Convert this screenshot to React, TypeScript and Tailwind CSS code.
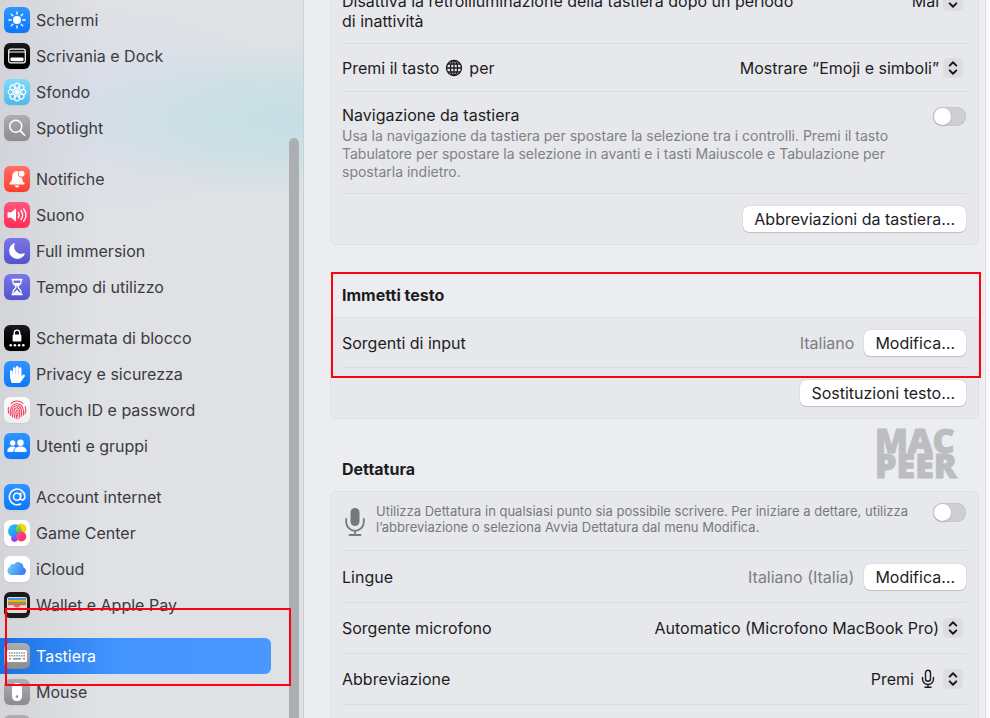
import type { ReactNode } from 'react'
import { IoMoon } from 'react-icons/io5'
import { FaHandPaper } from 'react-icons/fa'

type NavItem = {
  label: string
  tile: string
  icon: ReactNode
  selected?: boolean
}

const blue = 'bg-linear-to-b from-[#2e95ff] to-[#0a78fb]'
const black = 'bg-linear-to-b from-[#1c1c1e] to-[#000000]'
const indigo = 'bg-linear-to-b from-[#7a78e6] to-[#5452cf]'
const gray = 'bg-linear-to-b from-[#aeaeb2] to-[#8b8b90]'

function Glyph({ children }: { children: ReactNode }) {
  return (
    <svg viewBox="0 0 26 26" className="size-full" fill="none" stroke="none" aria-hidden="true">
      {children}
    </svg>
  )
}

const sunRays = [0, 45, 90, 135, 180, 225, 270, 315]

const groups: NavItem[][] = [
  [
    {
      label: 'Schermi',
      tile: blue,
      icon: (
        <Glyph>
          <circle cx="13" cy="13" r="4" fill="#fff" />
          {sunRays.map((a) => (
            <path key={a} d="M13 7.2V4.9" stroke="#fff" strokeWidth="1.3" strokeLinecap="round" transform={`rotate(${a} 13 13)`} />
          ))}
        </Glyph>
      ),
    },
    {
      label: 'Scrivania e Dock',
      tile: black,
      icon: (
        <Glyph>
          <rect x="4.7" y="6.2" width="16.6" height="13.6" rx="2" stroke="#fff" strokeWidth="1.2" />
          <path d="M5 9h16" stroke="#fff" strokeWidth="1" />
          <rect x="6.5" y="14.6" width="13" height="3.6" rx="0.8" fill="#fff" />
        </Glyph>
      ),
    },
    {
      label: 'Sfondo',
      tile: 'bg-linear-to-b from-[#7fdcf8] to-[#4fb8ee]',
      icon: (
        <Glyph>
          {sunRays.map((a) => (
            <circle key={a} cx="13" cy="6.7" r="2.5" stroke="#fff" strokeWidth="1.2" transform={`rotate(${a} 13 13)`} />
          ))}
          {sunRays.map((a) => (
            <path key={a} d="M13 13V9.4" stroke="#fff" strokeWidth="1" transform={`rotate(${a} 13 13)`} />
          ))}
          <circle cx="13" cy="13" r="2" stroke="#fff" strokeWidth="0.9" />
        </Glyph>
      ),
    },
    {
      label: 'Spotlight',
      tile: gray,
      icon: (
        <Glyph>
          <circle cx="11.8" cy="11.2" r="6" stroke="#fff" strokeWidth="1.5" />
          <path d="m16.2 15.6 4.2 4.4" stroke="#fff" strokeWidth="1.8" strokeLinecap="round" />
        </Glyph>
      ),
    },
  ],
  [
    {
      label: 'Notifiche',
      tile: 'bg-linear-to-b from-[#ff6f63] to-[#ff3b30]',
      icon: (
        <Glyph>
          <path
            d="M13 5c-3.2.3-4.8 2.7-4.8 5.7 0 3.3-.8 4.9-2.3 6.1-.9.8-.5 1.8.6 1.8h13c1.1 0 1.5-1 .6-1.8-1.3-1.1-2-2.5-2.2-5.2a3.8 3.8 0 0 1-3.4-5.900A5.300 5.300 0 0 0 13 5Z"
            fill="#fff"
          />
          <path d="M10.600 19.600h4.800c-.3 1.300-1.200 2-2.400 2s-2.100-.7-2.400-2Z" fill="#fff" />
          <circle cx="17.600" cy="7.700" r="2.900" fill="#fff" />
        </Glyph>
      ),
    },
    {
      label: 'Suono',
      tile: 'bg-linear-to-b from-[#ff5480] to-[#ff2d55]',
      icon: (
        <Glyph>
          <path d="M3.500 11.200c0-.6.400-1 1-1h2.800l3.700-3.300c.5-.4 1-.2 1 .4v11.400c0 .6-.5.800-1 .4l-3.700-3.300H4.500c-.6 0-1-.4-1-1Z" fill="#fff" />
          <path
            d="M14.200 10.300c1.100 1.600 1.100 3.800 0 5.400M17 8.500c2 2.700 2 6.300 0 9M19.700 6.800c2.800 3.800 2.800 8.600 0 12.400"
            stroke="#fff"
            strokeWidth="1.300"
            strokeLinecap="round"
          />
        </Glyph>
      ),
    },
    { label: 'Full immersion', tile: indigo, icon: <IoMoon className="size-[18px] text-white" /> },
    {
      label: 'Tempo di utilizzo',
      tile: indigo,
      icon: (
        <Glyph>
          <path d="M8.300 5.600h9.400M8.300 20.400h9.400" stroke="#fff" strokeWidth="1.800" strokeLinecap="round" />
          <path d="M9 6v2.500c0 2 3 3 3 4.500s-3 2.500-3 4.500V20M17 6v2.500c0 2-3 3-3 4.500s3 2.500 3 4.500V20" stroke="#fff" strokeWidth="1.300" />
          <path d="M9.600 9h6.800L13 12.500ZM9.800 19.800c0-1.800 2.200-2.500 3.200-4.300 1 1.800 3.200 2.500 3.200 4.300Z" fill="#fff" />
        </Glyph>
      ),
    },
  ],
  [
    {
      label: 'Schermata di blocco',
      tile: black,
      icon: (
        <Glyph>
          <path d="M10.300 10V7.800a2.700 2.700 0 0 1 5.400 0V10" stroke="#fff" strokeWidth="1.400" />
          <rect x="8.600" y="9.600" width="8.800" height="6.800" rx="1.200" fill="#fff" />
          <circle cx="6.700" cy="20.300" r="1.300" fill="#fff" />
          <circle cx="10.900" cy="20.300" r="1.300" fill="#fff" />
          <circle cx="15.100" cy="20.300" r="1.300" fill="#fff" />
          <circle cx="19.300" cy="20.300" r="1.300" fill="#fff" />
        </Glyph>
      ),
    },
    { label: 'Privacy e sicurezza', tile: blue, icon: <FaHandPaper className="size-[17px] -scale-x-100 text-white" /> },
    {
      label: 'Touch ID e password',
      tile: 'bg-linear-to-b from-[#fdfdfd] to-[#efefef]',
      icon: (
        <Glyph>
          <g stroke="#f2415f" strokeWidth="1.100" strokeLinecap="round">
            <path d="M7 6.300a9 9 0 0 1 12 0M4.500 10.500a9 9 0 0 0 .3 5.800M21.200 9.500a9 9 0 0 1-.2 7.300" />
            <path d="M6.600 18.300c-1.400-6 1.200-11.500 6.400-11.500 4.800 0 7.400 4.500 6.300 11.300" />
            <path d="M8.700 20c-1.600-5.600-.6-11.200 4.300-11.200 4 0 5.500 4.700 4.200 10.700" />
            <path d="M10.900 21.100c-1.700-5.300-1.400-10.300 2.100-10.300 3 0 3.600 4.900 2 10.300" />
            <path d="M13 21.600c-1.300-4-1.500-8.600 0-8.600s1.300 4 .3 6" />
          </g>
        </Glyph>
      ),
    },
    {
      label: 'Utenti e gruppi',
      tile: blue,
      icon: (
        <Glyph>
          <circle cx="8.700" cy="10" r="2.700" fill="#fff" />
          <path d="M3.300 18.300c0-2.800 2.300-4.700 5.400-4.700 1.100 0 2.100.2 2.900.7-1.400 1.100-2.200 2.600-2.300 4.700H4c-.5 0-.7-.3-.7-.7Z" fill="#fff" />
          <circle cx="16.500" cy="9.700" r="3.200" fill="#fff" />
          <path d="M10.300 18.200c0-2.900 2.600-4.700 6.200-4.700s6.200 1.800 6.200 4.700c0 .5-.3.800-.8.800H11.100c-.5 0-.8-.3-.8-.8Z" fill="#fff" />
        </Glyph>
      ),
    },
  ],
  [
    {
      label: 'Account internet',
      tile: blue,
      icon: (
        <Glyph>
          <circle cx="13" cy="12.800" r="3.500" stroke="#fff" strokeWidth="1.500" />
          <path d="M16.900 9.300l-.5 5c-.2 2.400 4.600 2.600 4.600-2.100A7.900 7.900 0 1 0 16.600 20" stroke="#fff" strokeWidth="1.500" strokeLinecap="round" />
        </Glyph>
      ),
    },
    {
      label: 'Game Center',
      tile: 'bg-white',
      icon: (
        <Glyph>
          <defs>
            <linearGradient id="gc-blue" x1="0" y1="0" x2="1" y2="1">
              <stop stopColor="#23d0f5" />
              <stop offset="1" stopColor="#3d6cf5" />
            </linearGradient>
            <linearGradient id="gc-green" x1="0" y1="0" x2="0" y2="1">
              <stop stopColor="#b5dc1e" />
              <stop offset="1" stopColor="#2fb567" />
            </linearGradient>
            <linearGradient id="gc-pink" x1="0" y1="0" x2="1" y2="1">
              <stop stopColor="#ff4fa0" />
              <stop offset="1" stopColor="#fb2b52" />
            </linearGradient>
          </defs>
          <circle cx="10.500" cy="18.600" r="3.300" fill="#a63af0" />
          <circle cx="17" cy="9" r="5.400" fill="#f8d60c" />
          <circle cx="10.800" cy="11" r="6.800" fill="url(#gc-blue)" />
          <path d="M14.300 4.900a6.800 6.800 0 0 1 3.200 7.500l-.4 2c-5.200-.4-7.800-5.800-2.800-9.500Z" fill="url(#gc-green)" />
          <circle cx="17.300" cy="16.500" r="5" fill="url(#gc-pink)" />
        </Glyph>
      ),
    },
    {
      label: 'iCloud',
      tile: 'bg-white',
      icon: (
        <Glyph>
          <defs>
            <linearGradient id="cloud" x1="0" y1="0.300" x2="1" y2="0.700">
              <stop stopColor="#6fcbfb" />
              <stop offset="1" stopColor="#3478f6" />
            </linearGradient>
          </defs>
          <path
            d="M7.200 19A4.300 4.300 0 0 1 5.700 11a3.300 3.300 0 0 1 4.300-2.800 5.300 5.300 0 0 1 9.500 3.200 4 4 0 0 1-.7 7.600Z"
            fill="url(#cloud)"
          />
        </Glyph>
      ),
    },
    {
      label: 'Wallet e Apple Pay',
      tile: 'bg-[#1b1b1d]',
      icon: (
        <Glyph>
          <rect x="3" y="5" width="20" height="16" rx="2" fill="#dfddd6" />
          <path d="M4 6h18v2.500H4Z" fill="#3f9bd9" />
          <path d="M4 8h18v2.300H4Z" fill="#f3b32f" />
          <path d="M4 9.800h18v2H4Z" fill="#5bb24f" />
          <path d="M4 11.300h18v1.900h-5.200c-.9 0-1.400 2.300-3.800 2.300s-2.900-2.300-3.800-2.300H4Z" fill="#f0604f" />
        </Glyph>
      ),
    },
  ],
  [
    {
      label: 'Tastiera',
      tile: gray,
      selected: true,
      icon: (
        <Glyph>
          <rect x="3" y="7" width="20" height="12" rx="1.500" fill="#fff" />
          <path d="M5 10h16M5 12.700h16" stroke="#8e8e93" strokeWidth="1.500" strokeDasharray="1.500 0.900" />
          <path d="M5 15.700h2M9 15.700h8M19 15.700h2" stroke="#8e8e93" strokeWidth="1.500" />
        </Glyph>
      ),
    },
    {
      label: 'Mouse',
      tile: gray,
      icon: (
        <Glyph>
          <rect x="8" y="4" width="10" height="18" rx="4.500" fill="#fff" />
          <circle cx="13" cy="17.500" r="1.200" fill="#8e8e93" />
        </Glyph>
      ),
    },
    { label: 'Trackpad', tile: gray, icon: null },
  ],
]

function Sidebar() {
  return (
    <aside className="flex w-[304px] shrink-0 border-r border-[#cfd0d4] bg-[linear-gradient(90deg,rgba(200,201,206,0.500)_0,rgba(205,206,211,0.350)_50px,rgba(224,225,229,0)_100px),radial-gradient(ellipse_230px_80px_at_290px_120px,#c5dfe4_0%,rgba(200,224,228,0.750)_50%,rgba(224,225,229,0)_100%),radial-gradient(ellipse_190px_110px_at_110px_110px,#d8ddea_0%,rgba(224,225,229,0)_100%)] bg-[#e0e1e5]">
      <nav aria-label="Impostazioni" className="flex min-w-0 flex-1 flex-col gap-[15px] pt-0.5 pr-[18px]">
        {groups.map((items, i) => (
          <ul key={i}>
            {items.map((item) => (
              <li key={item.label} className="relative">
                <a
                  href="#"
                  aria-current={item.selected ? 'page' : undefined}
                  className={
                    item.selected
                      ? 'flex h-9 items-center gap-1.5 rounded-r-md bg-linear-to-r from-[#1473e6] via-[#4595ff] via-45% to-[#4a97ff] pl-1 text-base text-white'
                      : 'flex h-9 items-center gap-1.5 pl-1 text-base text-[#3a3b3f]'
                  }
                >
                  <span className={`flex size-[26px] shrink-0 items-center justify-center rounded-md shadow-xs ${item.tile}`}>
                    {item.icon}
                  </span>
                  {item.label}
                </a>
                {item.selected && (
                  <span className="pointer-events-none absolute -top-[30px] -right-5 left-[5px] z-10 h-[78px] border-2 border-[#ff0015]" />
                )}
              </li>
            ))}
          </ul>
        ))}
      </nav>
      <div className="mt-[138px] mr-1 w-2.5 rounded-t-full bg-[#adaeb2]" />
    </aside>
  )
}

function Chevrons() {
  return (
    <span className="pointer-events-none absolute top-0 right-[3px] flex size-5 items-center justify-center rounded-[5px] bg-[#dcdde1]">
      <svg viewBox="0 0 20 20" className="size-5" fill="none" stroke="#1d1d1f" strokeWidth="2" strokeLinecap="round" strokeLinejoin="round" aria-hidden="true">
        <path d="M6.700 7.600 10 4.200l3.300 3.400M6.700 12.400l3.300 3.400 3.300-3.400" />
      </svg>
    </span>
  )
}

function Picker({ label, value, icon }: { label: string; value: string; icon?: ReactNode }) {
  return (
    <span className="relative flex h-5 items-center">
      <select
        aria-label={label}
        className={`field-sizing-content h-5 appearance-none bg-transparent text-base leading-5 text-[#1d1d1f] ${icon ? 'pr-[52px]' : 'pr-[27px]'}`}
      >
        <option>{value}</option>
      </select>
      {icon && <span className="pointer-events-none absolute right-[31px]">{icon}</span>}
      <Chevrons />
    </span>
  )
}

function Toggle({ label }: { label: string }) {
  return (
    <input
      type="checkbox"
      role="switch"
      aria-label={label}
      className="h-[19px] w-[33px] shrink-0 appearance-none rounded-full bg-[#cecfd3] p-px shadow-[inset_0_0_1px_rgba(0,0,0,0.300)] before:block before:size-[17px] before:rounded-full before:bg-white before:shadow-sm checked:bg-[#0a78fb] checked:before:ml-3.5"
    />
  )
}

function PushButton({ children }: { children: ReactNode }) {
  return (
    <button
      type="button"
      className="h-[26px] shrink-0 rounded-md bg-white px-[11px] text-base leading-6 text-[#1d1d1f] shadow-[0_0_1px_rgba(0,0,0,0.300),0_1px_1px_rgba(0,0,0,0.150)]"
    >
      {children}
    </button>
  )
}

function Card({ children, className = '' }: { children: ReactNode; className?: string }) {
  return (
    <div className={`rounded-md border border-[#dedfe3] bg-[#e7e8ec] pr-3 pl-[11px] ${className}`}>
      <div className="divide-y divide-[#dadbdf]">{children}</div>
    </div>
  )
}

function Row({ children, className = 'h-[51px] items-center' }: { children: ReactNode; className?: string }) {
  return <div className={`flex justify-between gap-3 ${className}`}>{children}</div>
}

function SectionTitle({ children }: { children: ReactNode }) {
  return <h2 className="h-[72px] pt-10 pl-3 text-base leading-5 font-bold">{children}</h2>
}

function Watermark() {
  return (
    <svg viewBox="0 0 84 54" className="absolute top-2 right-5 h-[54px] w-[84px]" aria-hidden="true">
      <g fill="#bcbdc1" stroke="#bcbdc1" strokeWidth="1" fontFamily="'Open Sans', sans-serif" fontWeight="800" fontSize="34">
        <text x="0" y="26">MAC</text>
        <text x="0" y="51">PEER</text>
      </g>
    </svg>
  )
}

export default function App() {
  return (
    <div className="flex h-screen overflow-hidden bg-[#f8f8fa] pr-1 font-['Inter','Liberation_Sans',sans-serif] text-base text-[#1d1d1f]">
      <Sidebar />
      <main className="min-w-0 flex-1 border-r border-[#dfe0e4] bg-[#ecedf1] pr-1.5 pl-[26px]">
        <Card className="-mt-[22px]">
          <Row className="items-start py-3 leading-5">
            <p className="max-w-[464px]">Disattiva la retroilluminazione della tastiera dopo un periodo di inattività</p>
            <Picker label="Disattiva la retroilluminazione" value="Mai" />
          </Row>
          <Row className="h-12 items-center">
            <p className="flex items-center gap-1.5">
              Premi il tasto
              <svg viewBox="0 0 18 18" className="size-[18px]" fill="none" stroke="#1d1d1f" strokeWidth="1.300" aria-label="Globo">
                <circle cx="9" cy="9" r="7.500" />
                <ellipse cx="9" cy="9" rx="3.600" ry="7.500" />
                <path d="M9 1.500v15M1.500 9h15M2.800 5h12.400M2.800 13h12.400" />
              </svg>
              per
            </p>
            <Picker label="Premi il tasto globo per" value="Mostrare “Emoji e simboli”" />
          </Row>
          <Row className="items-start pt-[11px] pb-3">
            <div>
              <p className="leading-6">Navigazione da tastiera</p>
              <p className="max-w-[570px] text-[14px] leading-[18px] text-[#808185]">
                Usa la navigazione da tastiera per spostare la selezione tra i controlli. Premi il tasto Tabulatore per
                spostare la selezione in avanti e i tasti Maiuscole e Tabulazione per spostarla indietro.
              </p>
            </div>
            <div className="flex pt-1">
              <Toggle label="Navigazione da tastiera" />
            </div>
          </Row>
          <Row className="justify-end py-3">
            <span className="flex-1" />
            <PushButton>Abbreviazioni da tastiera…</PushButton>
          </Row>
        </Card>

        <section className="relative">
          <SectionTitle>Immetti testo</SectionTitle>
          <Card>
            <Row className="h-[50px] items-center">
              <p>Sorgenti di input</p>
              <div className="flex items-center gap-2.5">
                <span className="text-[#7c7d81]">Italiano</span>
                <PushButton>Modifica…</PushButton>
              </div>
            </Row>
            <Row className="h-[50px] items-center">
              <span className="flex-1" />
              <PushButton>Sostituzioni testo…</PushButton>
            </Row>
          </Card>
          <span className="pointer-events-none absolute top-[27px] -right-0.5 left-px h-[106px] border-2 border-[#ff0015]" />
        </section>

        <section className="relative">
          <SectionTitle>Dettatura</SectionTitle>
          <Watermark />
          <Card>
            <Row className="h-[59px] pt-[11px]">
              <div className="flex flex-1 gap-2">
                <svg viewBox="0 0 26 32" className="mt-1 h-8 w-[26px] shrink-0" fill="none" stroke="#77787c" strokeWidth="1.800" strokeLinecap="round" aria-hidden="true">
                  <rect x="8.500" y="1" width="9" height="18" rx="4.500" fill="#77787c" stroke="none" />
                  <path d="M4.200 12v3a8.800 8.800 0 0 0 17.600 0v-3M13 24v3.500M7.500 28h11" />
                </svg>
                <p className="max-w-[545px] text-[13px] leading-4 text-[#77787c]">
                  Utilizza Dettatura in qualsiasi punto sia possibile scrivere. Per iniziare a dettare, utilizza
                  l’abbreviazione o seleziona Avvia Dettatura dal menu Modifica.
                </p>
              </div>
              <Toggle label="Dettatura" />
            </Row>
            <Row className="h-[52px] items-center">
              <p>Lingue</p>
              <div className="flex items-center gap-2.5">
                <span className="text-[#7c7d81]">Italiano (Italia)</span>
                <PushButton>Modifica…</PushButton>
              </div>
            </Row>
            <Row>
              <p>Sorgente microfono</p>
              <Picker label="Sorgente microfono" value="Automatico (Microfono MacBook Pro)" />
            </Row>
            <Row>
              <p>Abbreviazione</p>
              <Picker
                label="Abbreviazione"
                value="Premi"
                icon={
                  <svg viewBox="0 0 14 20" className="h-5 w-3.5" fill="none" stroke="#1d1d1f" strokeWidth="1.400" strokeLinecap="round" aria-hidden="true">
                    <rect x="4.500" y="1.200" width="5" height="11" rx="2.500" />
                    <path d="M1.500 8.500v1.500a5.500 5.500 0 0 0 11 0V8.500M7 15.500v2.500M4 18.300h6" />
                  </svg>
                }
              />
            </Row>
            <Row>
              <p>Punteggiatura automatica</p>
              <Toggle label="Punteggiatura automatica" />
            </Row>
          </Card>
        </section>
      </main>
    </div>
  )
}
